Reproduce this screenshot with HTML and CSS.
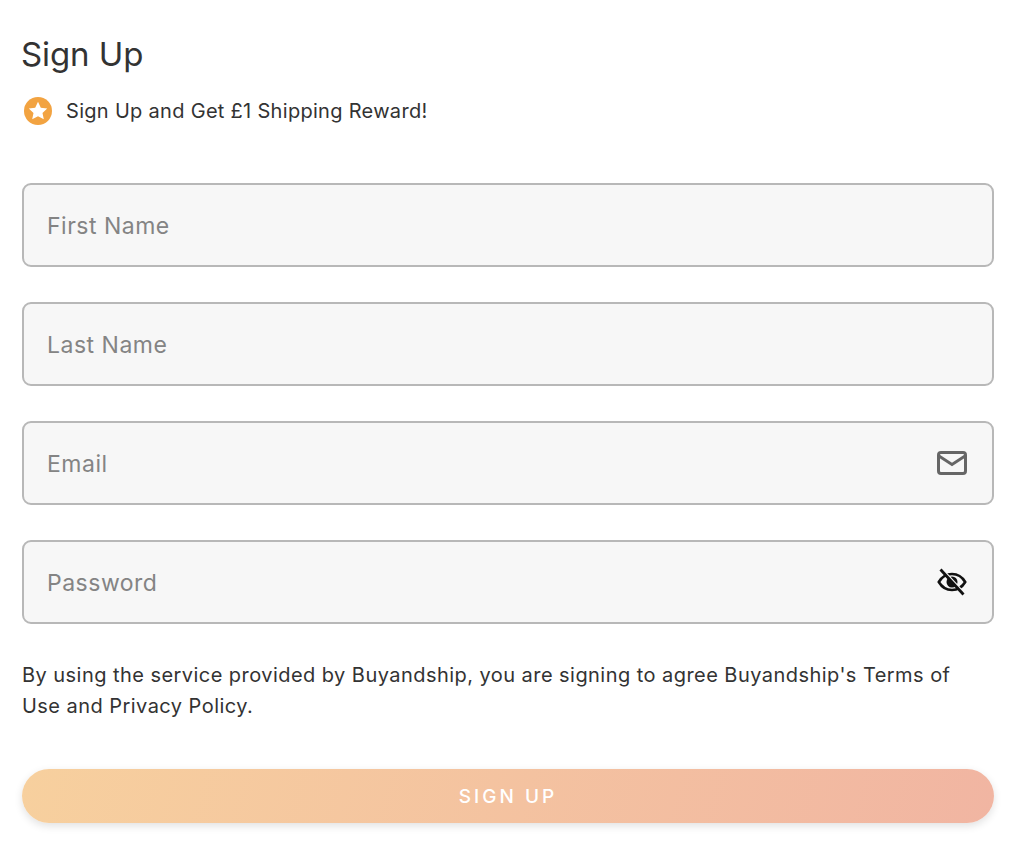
FILE: index.html
```html
<!DOCTYPE html>
<html lang="en">
<head>
    <meta charset="UTF-8">
    <title>Sign Up</title>
    <link rel="stylesheet" href="styles.css">
</head>
<body>
    <main class="signup">
        <h1 class="title">Sign Up</h1>
        <div class="reward">
            <svg class="reward-icon" viewBox="0 0 28 28" width="28" height="28">
                <circle cx="14" cy="14" r="14" fill="#f2a341"/>
                <path d="M14 4.800l2.800 5.900 6.400.8-4.700 4.400 1.300 6.300L14 19.200l-5.800 3 1.300-6.300-4.700-4.400 6.400-.8z" fill="#fff"/>
            </svg>
            <span>Sign Up and Get £1 Shipping Reward!</span>
        </div>

        <form class="fields">
            <div class="field"><span class="placeholder">First Name</span></div>
            <div class="field"><span class="placeholder">Last Name</span></div>
            <div class="field">
                <span class="placeholder">Email</span>
                <svg class="field-icon" viewBox="0 0 30 24" width="30" height="24">
                    <rect x="1.500" y="1.500" width="27" height="21" rx="2.500" fill="none" stroke="#666" stroke-width="3"/>
                    <path d="M2 5l13 8.500L28 5" fill="none" stroke="#666" stroke-width="2.800"/>
                </svg>
            </div>
            <div class="field">
                <span class="placeholder">Password</span>
                <svg class="field-icon" viewBox="0 0 30 28" width="30" height="28">
                    <path d="M1.800 14C5 8.600 9.600 6 15 6s10 2.600 13.200 8C25 19.400 20.400 22 15 22S5 19.400 1.800 14z" fill="none" stroke="#111" stroke-width="2.600"/>
                    <circle cx="15" cy="14" r="5.500" fill="#111"/>
                    <path d="M5.500 1.500l23 25" stroke="#f6f6f6" stroke-width="2"/>
                    <path d="M3.500 1.500l23 25" stroke="#111" stroke-width="2.800"/>
                </svg>
            </div>
        </form>

        <p class="terms">By using the service provided by Buyandship, you are signing to agree Buyandship's Terms of Use and Privacy Policy.</p>

        <button class="submit" type="button">SIGN UP</button>
    </main>
</body>
</html>
```

FILE: styles.css
```css
body {
    margin: 0;
    background: #fff;
    color: #333;
    font-family: "Inter", "Liberation Sans", sans-serif;
}

.signup {
    padding: 32px 30px 30px 22px;
    display: flex;
    flex-direction: column;
}

.title {
    margin: 0;
    font-size: 33px;
    font-weight: 400;
    line-height: 44px;
    letter-spacing: -0.1px;
    text-indent: -1px;
}

.reward {
    display: flex;
    align-items: center;
    gap: 14px;
    margin-top: 21px;
    padding-left: 2px;
    font-size: 20px;
    line-height: 28px;
    letter-spacing: 0.3px;
}

.reward-icon {
    flex: none;
}

.fields {
    display: flex;
    flex-direction: column;
    gap: 35px;
    margin-top: 58px;
}

.field {
    height: 84px;
    box-sizing: border-box;
    display: flex;
    align-items: center;
    justify-content: space-between;
    padding: 0 25px 0 23px;
    background: #f7f7f7;
    border: 2px solid #b8b8b8;
    border-radius: 9px;
}

.placeholder {
    padding-top: 2px;
    font-size: 23px;
    color: #848484;
    letter-spacing: 0.5px;
}

.terms {
    margin: 36px 0 0;
    font-size: 20px;
    line-height: 31px;
    letter-spacing: 0.45px;
}

.submit {
    margin-top: 47px;
    height: 54px;
    border: none;
    border-radius: 27px;
    background: linear-gradient(105deg, #f7d09e, #f1b5a2);
    box-shadow: 0 3px 8px rgba(0, 0, 0, 0.12);
    color: #fff;
    font-family: inherit;
    font-size: 19px;
    font-weight: 500;
    letter-spacing: 3px;
}
```
